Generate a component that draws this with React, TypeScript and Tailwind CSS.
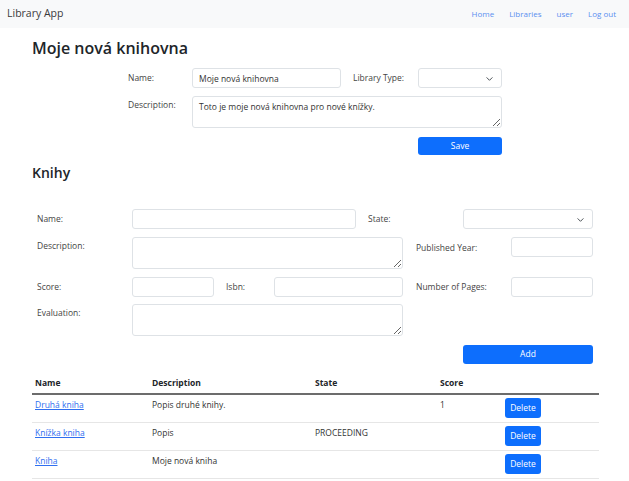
import React from 'react';

const font = { fontFamily: '"Open Sans", "Noto Sans", sans-serif' };

const inputCls = 'h-[20px] rounded-[3px] border border-[#dee2e6] bg-white px-[6px] text-[8.5px] text-[#333] outline-none';
const areaCls = 'rounded-[3px] border border-[#dee2e6] bg-white px-[6px] py-[4px] text-[8.5px] text-[#333] outline-none resize-y';

const Select = ({ className }: { className: string }) => (
  <div className={`relative ${inputCls} ${className}`}>
    <svg className="absolute right-[8px] top-[7px] h-[6px] w-[7px]" viewBox="0 0 16 12" fill="none">
      <path d="M2 3l6 6 6-6" stroke="#343a40" strokeWidth="2" strokeLinecap="round" strokeLinejoin="round" />
    </svg>
  </div>
);

const books = [
  { name: 'Druhá kniha', description: 'Popis druhé knihy.', state: '', score: '1' },
  { name: 'Knížka kniha', description: 'Popis', state: 'PROCEEDING', score: '' },
  { name: 'Kniha', description: 'Moje nová kniha', state: '', score: '' },
];

export default function App() {
  return (
    <div className="min-h-[481px] w-[629px] bg-white text-[#212529]" style={font}>
      {/* navbar */}
      <nav className="flex h-[28px] items-center justify-between bg-[#f8f9fa] pl-[7px] pr-[13px]">
        <span className="text-[10.5px] text-[#3a3a3a]">Library App</span>
        <div className="flex gap-[15px] text-[8px] text-[#5b8ff0]">
          <a>Home</a>
          <a>Libraries</a>
          <a>user</a>
          <a>Log out</a>
        </div>
      </nav>

      <div className="px-[32px]">
        <h1 className="pt-[8px] text-[16px] font-semibold leading-[24px]">Moje nová knihovna</h1>

        {/* library form */}
        <div className="ml-[96px] mt-[8px] flex flex-col text-[8.5px] text-[#444]">
          <div className="flex items-center">
            <label className="w-[64px]">Name:</label>
            <input className={`${inputCls} w-[149px]`} defaultValue="Moje nová knihovna" />
            <label className="ml-[12px] w-[65px]">Library Type:</label>
            <Select className="w-[84px]" />
          </div>
          <div className="mt-[8px] flex items-start">
            <label className="w-[64px] pt-[3px]">Description:</label>
            <textarea
              className={`${areaCls} h-[32px] w-[310px]`}
              defaultValue="Toto je moje nová knihovna pro nové knížky."
            />
          </div>
          <div className="mt-[9px] flex">
            <button className="ml-[290px] h-[18px] w-[84px] rounded-[3px] bg-[#0d6efd] text-[8.5px] text-white">Save</button>
          </div>
        </div>

        <h2 className="mt-[8px] text-[14px] font-semibold leading-[20px]">Knihy</h2>

        {/* book form */}
        <div className="ml-[5px] mt-[26px] flex flex-col text-[8.5px] text-[#444]">
          <div className="flex items-center">
            <label className="w-[95px]">Name:</label>
            <input className={`${inputCls} w-[224px]`} />
            <label className="ml-[12px] w-[95px]">State:</label>
            <Select className="w-[130px]" />
          </div>
          <div className="mt-[8px] flex items-start">
            <label className="w-[95px] pt-[3px]">Description:</label>
            <textarea className={`${areaCls} h-[32px] w-[271px]`} />
            <label className="ml-[13px] w-[95px] pt-[5px]">Published Year:</label>
            <input className={`${inputCls} w-[82px]`} />
          </div>
          <div className="mt-[8px] flex items-center">
            <label className="w-[95px]">Score:</label>
            <input className={`${inputCls} w-[82px]`} />
            <label className="ml-[12px] w-[48px]">Isbn:</label>
            <input className={`${inputCls} w-[129px]`} />
            <label className="ml-[13px] w-[95px]">Number of Pages:</label>
            <input className={`${inputCls} w-[82px]`} />
          </div>
          <div className="mt-[7px] flex items-start">
            <label className="w-[95px] pt-[3px]">Evaluation:</label>
            <textarea className={`${areaCls} h-[32px] w-[271px]`} />
          </div>
          <div className="mt-[9px] flex">
            <button className="ml-[426px] h-[19px] w-[130px] rounded-[3px] bg-[#0d6efd] text-[8.5px] text-white">Add</button>
          </div>
        </div>

        {/* table */}
        <table className="mt-[9px] w-[567px] table-fixed border-collapse text-left text-[8.5px]">
          <colgroup>
            <col className="w-[117px]" />
            <col className="w-[163px]" />
            <col className="w-[125px]" />
            <col className="w-[65px]" />
            <col />
          </colgroup>
          <thead>
            <tr className="border-b-2 border-[#6c6c6c]">
              <th className="h-[21px] px-[3px] font-bold">Name</th>
              <th className="px-[3px] font-bold">Description</th>
              <th className="px-[3px] font-bold">State</th>
              <th className="px-[3px] font-bold">Score</th>
              <th />
            </tr>
          </thead>
          <tbody className="text-[#333]">
            {books.map((b) => (
              <tr key={b.name} className="h-[28px] border-b border-[#e6e6e6]">
                <td className="px-[3px] pt-[4px] align-top">
                  <a className="text-[#2f6ff0] underline">{b.name}</a>
                </td>
                <td className="px-[3px] pt-[4px] align-top">{b.description}</td>
                <td className="px-[3px] pt-[4px] align-top">{b.state}</td>
                <td className="px-[3px] pt-[4px] align-top">{b.score}</td>
                <td className="px-[3px] align-middle">
                  <button className="h-[20px] w-[36px] rounded-[3px] bg-[#0d6efd] text-[8.5px] text-white">Delete</button>
                </td>
              </tr>
            ))}
          </tbody>
        </table>
      </div>
    </div>
  );
}
